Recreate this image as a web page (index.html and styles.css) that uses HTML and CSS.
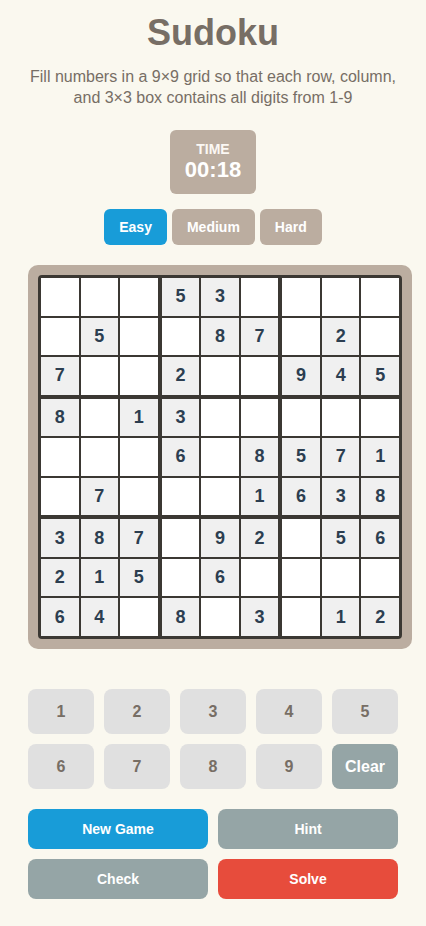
FILE: index.html
```html
<!DOCTYPE html>
<html lang="en">
<head>
<meta charset="utf-8">
<meta name="viewport" content="width=device-width, initial-scale=1">
<title>Sudoku</title>
<link rel="stylesheet" href="styles.css">
</head>
<body>
<main class="app">
  <h1 class="title">Sudoku</h1>
  <p class="subtitle">Fill numbers in a 9×9 grid so that each row, column, and 3×3 box contains all digits from 1-9</p>

  <div class="timer-wrap">
    <div class="timer">
      <div class="timer-label">TIME</div>
      <div class="timer-value">00:18</div>
    </div>
  </div>

  <div class="difficulty">
    <button class="diff-btn active">Easy</button>
    <button class="diff-btn">Medium</button>
    <button class="diff-btn">Hard</button>
  </div>

  <div class="board-frame">
    <div class="board">
      <div class="box">
        <div class="cell"></div><div class="cell"></div><div class="cell"></div>
        <div class="cell"></div><div class="cell given">5</div><div class="cell"></div>
        <div class="cell given">7</div><div class="cell"></div><div class="cell"></div>
      </div>
      <div class="box">
        <div class="cell given">5</div><div class="cell given">3</div><div class="cell"></div>
        <div class="cell"></div><div class="cell given">8</div><div class="cell given">7</div>
        <div class="cell given">2</div><div class="cell"></div><div class="cell"></div>
      </div>
      <div class="box">
        <div class="cell"></div><div class="cell"></div><div class="cell"></div>
        <div class="cell"></div><div class="cell given">2</div><div class="cell"></div>
        <div class="cell given">9</div><div class="cell given">4</div><div class="cell given">5</div>
      </div>
      <div class="box">
        <div class="cell given">8</div><div class="cell"></div><div class="cell given">1</div>
        <div class="cell"></div><div class="cell"></div><div class="cell"></div>
        <div class="cell"></div><div class="cell given">7</div><div class="cell"></div>
      </div>
      <div class="box">
        <div class="cell given">3</div><div class="cell"></div><div class="cell"></div>
        <div class="cell given">6</div><div class="cell"></div><div class="cell given">8</div>
        <div class="cell"></div><div class="cell"></div><div class="cell given">1</div>
      </div>
      <div class="box">
        <div class="cell"></div><div class="cell"></div><div class="cell"></div>
        <div class="cell given">5</div><div class="cell given">7</div><div class="cell given">1</div>
        <div class="cell given">6</div><div class="cell given">3</div><div class="cell given">8</div>
      </div>
      <div class="box">
        <div class="cell given">3</div><div class="cell given">8</div><div class="cell given">7</div>
        <div class="cell given">2</div><div class="cell given">1</div><div class="cell given">5</div>
        <div class="cell given">6</div><div class="cell given">4</div><div class="cell"></div>
      </div>
      <div class="box">
        <div class="cell"></div><div class="cell given">9</div><div class="cell given">2</div>
        <div class="cell"></div><div class="cell given">6</div><div class="cell"></div>
        <div class="cell given">8</div><div class="cell"></div><div class="cell given">3</div>
      </div>
      <div class="box">
        <div class="cell"></div><div class="cell given">5</div><div class="cell given">6</div>
        <div class="cell"></div><div class="cell"></div><div class="cell"></div>
        <div class="cell"></div><div class="cell given">1</div><div class="cell given">2</div>
      </div>
    </div>
  </div>

  <div class="numpad">
    <button class="num-btn">1</button>
    <button class="num-btn">2</button>
    <button class="num-btn">3</button>
    <button class="num-btn">4</button>
    <button class="num-btn">5</button>
    <button class="num-btn">6</button>
    <button class="num-btn">7</button>
    <button class="num-btn">8</button>
    <button class="num-btn">9</button>
    <button class="num-btn clear">Clear</button>
  </div>

  <div class="actions">
    <button class="act-btn blue">New Game</button>
    <button class="act-btn gray">Hint</button>
    <button class="act-btn gray">Check</button>
    <button class="act-btn red">Solve</button>
  </div>
</main>
</body>
</html>
```

FILE: styles.css
```css
* {
  box-sizing: border-box;
}

html, body {
  margin: 0;
  padding: 0;
  background: #faf8ef;
}

body {
  font-family: "Liberation Sans", Arial, sans-serif;
  color: #776e65;
}

.app {
  width: 370px;
  margin: 0 auto;
  padding-top: 12px;
}

.title {
  margin: 0;
  font-size: 36px;
  line-height: 42px;
  font-weight: bold;
  text-align: center;
  color: #776e65;
}

.subtitle {
  margin: 12px -10px 0;
  font-size: 16px;
  line-height: 21px;
  text-align: center;
  color: #776e65;
}

.timer-wrap {
  display: flex;
  justify-content: center;
  margin-top: 22px;
}

.timer {
  background: #bbada0;
  border-radius: 6px;
  padding: 11px 15px 11px;
  text-align: center;
}

.timer-label {
  font-size: 14px;
  line-height: 16px;
  font-weight: bold;
  color: #fbf8f4;
}

.timer-value {
  font-size: 22px;
  line-height: 26px;
  font-weight: bold;
  color: #ffffff;
}

.difficulty {
  display: flex;
  justify-content: center;
  gap: 5px;
  margin-top: 15px;
}

button {
  font-family: "Liberation Sans", Arial, sans-serif;
  border: none;
  margin: 0;
  cursor: pointer;
}

.diff-btn {
  background: #bbada0;
  color: #ffffff;
  font-size: 14px;
  line-height: 16px;
  font-weight: bold;
  padding: 10px 15px;
  border-radius: 6px;
}

.diff-btn.active {
  background: #189cd8;
}

.board-frame {
  width: 384px;
  margin-top: 20px;
  padding: 10px;
  background: #bbada0;
  border-radius: 10px;
}

.board {
  width: 364px;
  height: 364px;
  display: grid;
  grid-template-columns: repeat(3, 1fr);
  grid-template-rows: repeat(3, 1fr);
  gap: 4px;
  background: #3b3833;
  border: 3px solid #3b3833;
  border-radius: 4px;
}

.box {
  display: grid;
  grid-template-columns: repeat(3, 1fr);
  grid-template-rows: repeat(3, 1fr);
  gap: 2px;
}

.cell {
  background: #ffffff;
  display: flex;
  align-items: center;
  justify-content: center;
  font-size: 18px;
  font-weight: bold;
  color: #2c3e50;
}

.cell.given {
  background: #f0f0f0;
}

.numpad {
  display: grid;
  grid-template-columns: repeat(5, 1fr);
  gap: 10px;
  margin-top: 40px;
}

.num-btn {
  height: 45px;
  background: #e0e0e0;
  color: #776e65;
  font-size: 16px;
  font-weight: bold;
  border-radius: 8px;
}

.num-btn.clear {
  background: #95a5a6;
  color: #ffffff;
}

.actions {
  display: grid;
  grid-template-columns: repeat(2, 1fr);
  gap: 10px;
  margin-top: 20px;
}

.act-btn {
  height: 40px;
  font-size: 14px;
  font-weight: bold;
  color: #ffffff;
  border-radius: 8px;
}

.act-btn.blue {
  background: #189cd8;
}

.act-btn.gray {
  background: #95a5a6;
}

.act-btn.red {
  background: #e74c3c;
}
```
